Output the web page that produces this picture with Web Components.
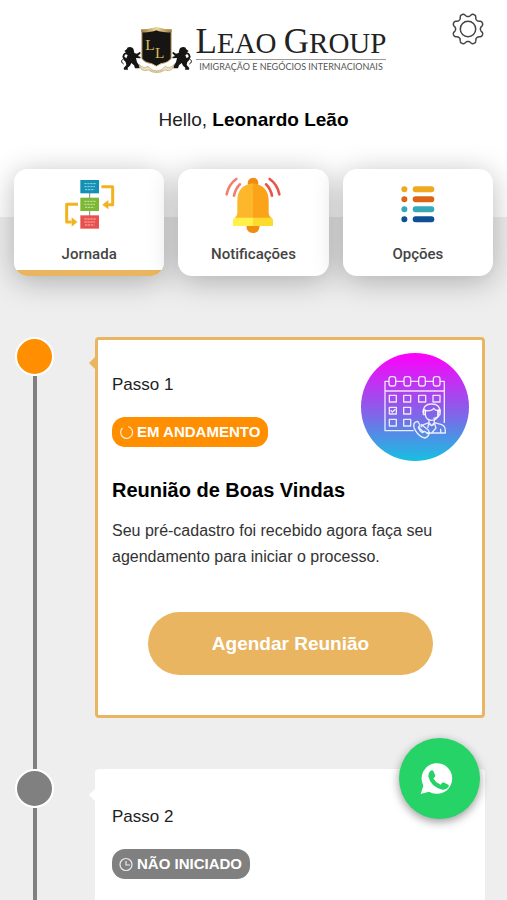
<!DOCTYPE html>
<html lang="pt-BR">
<head>
<meta charset="UTF-8">
<meta name="viewport" content="width=device-width, initial-scale=1.0">
<title>Leao Group</title>
<style>
  body {
    margin: 0;
    background: #eee;
    color: #222;
    font-family: "Liberation Sans", Arial, sans-serif;
  }
</style>
</head>
<body>
<journey-app>
  <app-header slot="header" name="Leonardo Leão"></app-header>
  <tab-bar slot="tabs">
    <tab-card icon="flow" active>Jornada</tab-card>
    <tab-card icon="bell">Notificações</tab-card>
    <tab-card icon="list">Opções</tab-card>
  </tab-bar>
  <step-item state="active">
    <span slot="step">Passo 1</span>
    <status-badge slot="status" state="active">EM ANDAMENTO</status-badge>
    <meeting-icon slot="picture"></meeting-icon>
    <step-details heading="Reunião de Boas Vindas" action="Agendar Reunião">Seu pré-cadastro foi recebido agora faça seu agendamento para iniciar o processo.</step-details>
  </step-item>
  <step-item>
    <span slot="step">Passo 2</span>
    <status-badge slot="status">NÃO INICIADO</status-badge>
  </step-item>
  <whatsapp-button slot="chat"></whatsapp-button>
</journey-app>

<script>
class JourneyApp extends HTMLElement {
  connectedCallback() {
    this.attachShadow({ mode: 'open' });
    this.shadowRoot.innerHTML = `
      <style>
        :host {
          display: block;
          height: 100vh;
          overflow: hidden;
        }
        main {
          padding: 61px 22px 0 15px;
        }
      </style>
      <slot name="header"></slot>
      <slot name="tabs"></slot>
      <main><slot></slot></main>
      <slot name="chat"></slot>
    `;
  }
}
customElements.define('journey-app', JourneyApp);

class AppHeader extends HTMLElement {
  connectedCallback() {
    this.attachShadow({ mode: 'open' });
    this.shadowRoot.innerHTML = `
      <style>
        :host {
          display: block;
          position: relative;
          background: #fff;
          padding: 26px 16px 36px;
        }
        p {
          margin: 32px 0 0;
          font-size: 19px;
          line-height: 27px;
          text-align: center;
        }
        b {
          color: #000;
        }
        gear-button {
          position: absolute;
          top: 12px;
          right: 22px;
        }
      </style>
      <brand-logo></brand-logo>
      <p>Hello, <b>${this.getAttribute('name')}</b></p>
      <gear-button></gear-button>
    `;
  }
}
customElements.define('app-header', AppHeader);

class BrandLogo extends HTMLElement {
  connectedCallback() {
    this.attachShadow({ mode: 'open' });
    this.shadowRoot.innerHTML = `
      <style>
        :host {
          display: flex;
          justify-content: center;
          gap: 4px;
        }
        svg {
          display: block;
          width: 71px;
          height: 48px;
        }
        .name {
          color: #222;
          font-family: "Liberation Serif", "Times New Roman", serif;
          font-size: 29px;
          line-height: 31px;
          border-bottom: 1px solid #999;
          white-space: nowrap;
        }
        .name span {
          font-size: 35px;
        }
        .tagline {
          color: #555;
          font-family: Lato, sans-serif;
          font-size: 9px;
          line-height: 14px;
          text-align: center;
          white-space: nowrap;
        }
      </style>
      <svg viewBox="30 33 213 144" aria-hidden="true">
        <defs>
          <linearGradient id="gold"><stop offset="0" stop-color="#9b7a3d"/><stop offset=".5" stop-color="#efd79a"/><stop offset="1" stop-color="#9b7a3d"/></linearGradient>
          <g id="lion" fill="#171514">
            <path d="M47 103q1-7 9-7 10 0 12 8l2 10 8 2 9-6 2 5-8 8 8 3-1 4-13-1 3 13 6 8 2 10H72l-3-9-8-7-4 8-7 6 1 6H39l-1-5 8-9-2-9-6-6-4-10 3-9 5 2-2 7 6 5 4-9-4-3-8 2 1-5 6-3-5-4z"/>
            <path d="M35 133q-8 8 3 14" fill="none" stroke="#171514" stroke-width="3"/>
          </g>
        </defs>
        <use href="#lion"/>
        <use href="#lion" transform="translate(273) scale(-1 1)"/>
        <path d="M93 46q23-3 43-8 20 5 44 8v84q-8 13-30 16l-14 8-14-8q-22-3-29-16z" fill="#171514" stroke="url(#gold)" stroke-width="3"/>
        <path d="M90 43q27 2 46-6 19 8 47 6l-2 9q-28 1-45-6-17 7-45 6z" fill="url(#gold)"/>
        <path d="M84 148q14 15 27 6 12 14 26 14t26-14q13 9 27-6l-7 15q-10 7-21 2-12 8-25 8t-25-8q-11 5-21-2z" fill="#eadfc4" stroke="#c2a566" stroke-width="2"/>
        <path d="M118 166q19 6 38 0" fill="none" stroke="#a88d52" stroke-width="2" stroke-dasharray="3 3"/>
        <g fill="#d8c156" font-family="Liberation Serif, serif" font-size="46">
          <text x="103" y="106">L</text>
          <text x="132" y="130">L</text>
        </g>
      </svg>
      <div>
        <div class="name"><span>L</span>EAO <span>G</span>ROUP</div>
        <div class="tagline">IMIGRAÇÃO E NEGÓCIOS INTERNACIONAIS</div>
      </div>
    `;
  }
}
customElements.define('brand-logo', BrandLogo);

class GearButton extends HTMLElement {
  // outline of an eight-toothed gear, with a notch at the top
  outline() {
    const points = [];
    for (let i = 0; i < 192; i++) {
      const a = (i / 192) * Math.PI * 2;
      const r = 14 - 1.6 * Math.tanh(1.2 * Math.cos(8 * a)) / Math.tanh(1.2);
      points.push((17 + r * Math.sin(a)).toFixed(2) + ' ' + (17 - r * Math.cos(a)).toFixed(2));
    }
    return 'M' + points.join('L') + 'Z';
  }
  connectedCallback() {
    this.attachShadow({ mode: 'open' });
    this.shadowRoot.innerHTML = `
      <style>
        :host {
          display: block;
        }
        button {
          display: block;
          padding: 0;
          border: 0;
          background: none;
          cursor: pointer;
        }
        svg {
          display: block;
          width: 34px;
          height: 34px;
        }
      </style>
      <button type="button" aria-label="Configurações">
        <svg viewBox="0 0 34 34" fill="none" stroke="#444" stroke-width="1.5" stroke-linejoin="round">
          <path d="${this.outline()}"/>
          <circle cx="17" cy="17" r="7.7"/>
        </svg>
      </button>
    `;
  }
}
customElements.define('gear-button', GearButton);

class TabBar extends HTMLElement {
  connectedCallback() {
    this.attachShadow({ mode: 'open' });
    // positioned, so that the shadows of the cards fall over the header too
    this.shadowRoot.innerHTML = `
      <style>
        :host {
          display: block;
          position: relative;
          background: linear-gradient(#fff 48px, #eee 48px);
        }
        nav {
          display: grid;
          grid-template-columns: repeat(3, 1fr);
          gap: 14px;
          padding: 0 14px;
        }
      </style>
      <nav><slot></slot></nav>
    `;
  }
}
customElements.define('tab-bar', TabBar);

const tabIcons = {
  flow: `
    <svg viewBox="172 54 192 192" aria-hidden="true">
      <path d="M270 110v80" stroke="#888" stroke-width="3"/>
      <path fill="#1291b5" d="M242 75h56v40h-56z"/>
      <path fill="#7cb832" d="M242 128h56v40h-56z"/>
      <path fill="#e8514d" d="M242 181h56v40h-56z"/>
      <g stroke="#fff" stroke-opacity=".6" stroke-width="3" stroke-dasharray="7 2">
        <path d="M254 86h34M254 95h32M256 104h28M254 139h34M254 148h32M256 157h28M254 192h34M254 201h32M256 210h28"/>
      </g>
      <g fill="none" stroke="#f3b31f" stroke-width="9" stroke-linejoin="round">
        <path d="M305 95h34v54h-15"/>
        <path d="M235 148h-34v53h15"/>
      </g>
      <path fill="#f3b31f" d="M308 149l18-14v28zM233 201l-17-14v28z"/>
    </svg>`,
  bell: `
    <svg viewBox="156 54 192 192" aria-hidden="true">
      <g fill="none" stroke-width="8" stroke-linecap="round">
        <path stroke="#f0806f" d="M202 72q-23 16-29 46M213 88q-13 12-18 34"/>
        <path stroke="#ea5547" d="M302 72q23 16 29 46M291 88q13 12 18 34"/>
      </g>
      <circle cx="252" cy="84" r="16" fill="#f08c10"/>
      <path fill="#f08c10" d="M232 210h40q0 24-20 24t-20-24z"/>
      <path fill="#fdb72b" d="M252 85q-47 6-47 52v36q0 9-9 17h56z"/>
      <path fill="#fba41a" d="M252 85q47 6 47 52v36q0 9 9 17h-56z"/>
      <path fill="#fff04a" d="M196 188h56v25h-60v-17q0-5 4-8z"/>
      <path fill="#fcdb2e" d="M252 188h56q4 3 4 8v17h-60z"/>
    </svg>`,
  list: `
    <svg viewBox="153 54 192 192" aria-hidden="true">
      <g stroke-width="18" stroke-linecap="round">
        <path stroke="#f0a81e" d="M208 103h.1M242 103h47"/>
        <path stroke="#dc6415" d="M208 133h.1M242 133h47"/>
        <path stroke="#35a9b8" d="M208 163h.1M242 163h47"/>
        <path stroke="#0e5094" d="M208 193h.1M242 193h47"/>
      </g>
    </svg>`
};

class TabCard extends HTMLElement {
  connectedCallback() {
    this.attachShadow({ mode: 'open' });
    this.shadowRoot.innerHTML = `
      <style>
        :host {
          display: block;
        }
        button {
          display: flex;
          flex-direction: column;
          align-items: center;
          gap: 7px;
          width: 100%;
          padding: 4px 0 12px;
          border: 0;
          border-radius: 14px;
          background: #fff;
          box-shadow: 0 5px 30px rgba(0, 0, 0, 0.28);
          color: #444;
          font-family: Roboto, sans-serif;
          font-size: 15px;
          font-weight: 500;
          line-height: 20px;
          cursor: pointer;
        }
        :host([active]) button {
          background: linear-gradient(to top, #e9b560 6px, #fff 6px);
        }
        svg {
          display: block;
          width: 64px;
          height: 64px;
        }
      </style>
      <button type="button">
        ${tabIcons[this.getAttribute('icon')]}
        <span><slot></slot></span>
      </button>
    `;
  }
}
customElements.define('tab-card', TabCard);

class StepItem extends HTMLElement {
  connectedCallback() {
    this.attachShadow({ mode: 'open' });
    this.shadowRoot.innerHTML = `
      <style>
        :host {
          --dot: #808080;
          --edge: #fff;
          display: grid;
          grid-template-columns: 39px 1fr;
          column-gap: 41px;
        }
        :host([state="active"]) {
          --dot: #ff8f00;
          --edge: #e9b560;
        }
        .rail {
          display: flex;
          flex-direction: column;
          align-items: center;
        }
        .dot {
          width: 35px;
          height: 35px;
          border: 2px solid #fff;
          border-radius: 50%;
          background: var(--dot);
        }
        .line {
          flex: 1;
          width: 4px;
          background: #808080;
        }
        .card {
          position: relative;
          min-height: 240px;
          margin-bottom: 51px;
          padding: 13px 13px 40px 14px;
          border: 3px solid var(--edge);
          border-radius: 4px;
          background: #fff;
        }
        .card::before {
          content: "";
          position: absolute;
          top: 16px;
          right: 100%;
          margin-right: 2px;
          border: 7px solid transparent;
          border-left: 0;
          border-right-color: var(--edge);
        }
        .top {
          display: flex;
          justify-content: space-between;
        }
        .step {
          margin: 22px 0;
          font-size: 17px;
          line-height: 20px;
        }
      </style>
      <div class="rail"><div class="dot"></div><div class="line"></div></div>
      <div class="card">
        <div class="top">
          <div>
            <div class="step"><slot name="step"></slot></div>
            <slot name="status"></slot>
          </div>
          <slot name="picture"></slot>
        </div>
        <slot></slot>
      </div>
    `;
  }
}
customElements.define('step-item', StepItem);

class StatusBadge extends HTMLElement {
  connectedCallback() {
    const icon = this.getAttribute('state') === 'active'
      ? '<path d="M9 1.5A6 6 0 1 1 3.5 3"/>'
      : '<circle cx="7" cy="7.5" r="6"/><path d="M7 4v4h4"/>';
    this.attachShadow({ mode: 'open' });
    this.shadowRoot.innerHTML = `
      <style>
        :host {
          display: inline-flex;
          align-items: center;
          gap: 3px;
          padding: 0 8px 0 7px;
          border-radius: 13px;
          background: #808080;
          color: #fff;
          font-size: 15px;
          font-weight: bold;
          line-height: 30px;
        }
        :host([state="active"]) {
          background: #ff8f00;
        }
        svg {
          width: 15px;
          height: 15px;
        }
      </style>
      <svg viewBox="0 0 15 15" fill="none" stroke="#fff" stroke-opacity=".85" stroke-width="1.2" aria-hidden="true">${icon}</svg>
      <span><slot></slot></span>
    `;
  }
}
customElements.define('status-badge', StatusBadge);

class MeetingIcon extends HTMLElement {
  connectedCallback() {
    this.attachShadow({ mode: 'open' });
    this.shadowRoot.innerHTML = `
      <style>
        :host {
          display: block;
          width: 108px;
          height: 108px;
          border-radius: 50%;
          background: linear-gradient(#ff00fb, #7d68e8 58%, #16c0e2);
        }
        svg {
          display: block;
        }
      </style>
      <svg viewBox="33 67 324 324" fill="none" stroke="#fff" stroke-opacity=".85" stroke-width="4" stroke-linejoin="round" aria-hidden="true">
        <path d="M117 152h-12v148h86M137 152h25M182 152h24M226 152h24M270 152h13v125M105 181h178"/>
        <g>
          <rect x="117" y="138" width="20" height="28" rx="7"/>
          <rect x="162" y="138" width="20" height="28" rx="7"/>
          <rect x="206" y="138" width="20" height="28" rx="7"/>
          <rect x="250" y="138" width="20" height="28" rx="7"/>
        </g>
        <path d="M118 194h21v20h-21zM161 194h21v20h-21zM206 194h21v20h-21zM249 194h21v20h-21zM118 230h21v20h-21zM161 230h21v20h-21zM118 266h21v20h-21zM161 266h21v20h-21z"/>
        <path d="M122 239l5 5 9-8"/>
        <path d="M220 247q-2-27 25-27t25 27M226 239v13q2 17 19 17t19-17v-13M226 240q20 2 25-7 5 7 13 7"/>
        <path d="M220 238v14h6v-14zM264 238v14h6v-14zM268 253q-3 9-18 10"/>
        <path d="M237 267v9l8 9 8-9v-9M237 276l-16 6q-6 3-9 8M253 276l22 6q11 5 11 18v7h-56M245 285l-9-5-3 12M245 285l9-5 4 12-13 15M272 294v13"/>
        <path d="M192 279q-3 8 4 20 11 19 29 23 7 0 12-11l-13-9-7 4q-9-6-12-16l5-7-7-11q-8 1-11 7z"/>
        <path d="M213 281l22 17 4 11M205 290l16 14"/>
      </svg>
    `;
  }
}
customElements.define('meeting-icon', MeetingIcon);

class StepDetails extends HTMLElement {
  connectedCallback() {
    this.attachShadow({ mode: 'open' });
    this.shadowRoot.innerHTML = `
      <style>
        :host {
          display: block;
        }
        h2 {
          margin: 17px 0 16px;
          color: #000;
          font-size: 20px;
          line-height: 24px;
        }
        p {
          margin: 0;
          color: #333;
          font-size: 16px;
          line-height: 26px;
        }
        button {
          display: block;
          width: 80%;
          margin: 42px auto 0;
          padding: 0;
          border: 0;
          border-radius: 32px;
          background: #e9b560;
          color: #fff;
          font-family: inherit;
          font-size: 19px;
          font-weight: bold;
          line-height: 63px;
          cursor: pointer;
        }
      </style>
      <h2>${this.getAttribute('heading')}</h2>
      <p><slot></slot></p>
      <button type="button">${this.getAttribute('action')}</button>
    `;
  }
}
customElements.define('step-details', StepDetails);

class WhatsappButton extends HTMLElement {
  connectedCallback() {
    this.attachShadow({ mode: 'open' });
    this.shadowRoot.innerHTML = `
      <style>
        :host {
          position: fixed;
          right: 27px;
          bottom: 81px;
        }
        a {
          display: block;
          width: 81px;
          height: 81px;
          border-radius: 50%;
          background: #25d366;
          box-shadow: 0 3px 10px rgba(0, 0, 0, 0.4);
        }
        svg {
          display: block;
        }
      </style>
      <a href="#whatsapp" aria-label="WhatsApp">
        <svg viewBox="57 54 243 243" aria-hidden="true">
          <path fill="#fff" d="M122 222l8-25a46 46 0 1 1 17 18z"/>
          <path fill="#25d366" d="M151 153q5-4 9 0l6 14q0 3-6 8 8 14 22 19 5-7 8-7l15 7q3 2 0 8-6 8-18 7-35-8-42-40-1-10 6-16z"/>
        </svg>
      </a>
    `;
  }
}
customElements.define('whatsapp-button', WhatsappButton);
</script>
</body>
</html>
